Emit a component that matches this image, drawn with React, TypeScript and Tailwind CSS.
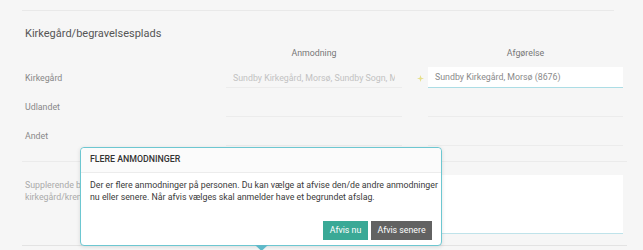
export default function App() {
  return (
    <div
      className="relative w-[643px] h-[250px] overflow-hidden bg-[#f6f6f6] text-[#777]"
      style={{ fontFamily: "Roboto, 'Liberation Sans', sans-serif" }}
    >
      {/* top divider */}
      <div className="pt-[10px] ml-[22px] mr-[29px]">
        <div className="border-t border-[#e9e9e9]" />
      </div>

      <div className="pl-[25px]">
        <h2 className="mt-[15px] text-[11px] leading-[15px] text-[#555]">Kirkegård/begravelsesplads</h2>

        {/* column headers */}
        <div className="mt-[6px] grid grid-cols-[201px_176px_26px_195px] text-[8.8px] leading-[12px] text-[#777]">
          <div />
          <div className="text-center">Anmodning</div>
          <div />
          <div className="text-center">Afgørelse</div>
        </div>

        {/* rows */}
        <div>
          <div className="h-[29px] grid grid-cols-[201px_176px_26px_195px] items-end">
            <div className="h-[20px] flex items-center pt-[2px] text-[8.8px] text-[#888]">Kirkegård</div>
            <div className="h-[20px] flex items-center pt-[2px] border-b border-[#ececec] pl-[7px] pr-[7px] overflow-hidden">
              <span className="text-[8.8px] text-[#c2c2c2] whitespace-nowrap overflow-hidden">
                Sundby Kirkegård, Morsø, Sundby Sogn, Morsø
              </span>
            </div>
            <div className="h-[20px] flex items-center justify-end pr-[4px]">
              <svg width="7" height="7" viewBox="0 0 10 10">
                <path d="M5 0 L6.2 3.8 L10 5 L6.2 6.2 L5 10 L3.8 6.2 L0 5 L3.8 3.8 Z" fill="#e6df8a" />
              </svg>
            </div>
            <div className="h-[21px] flex items-center pt-[1px] bg-white border-b-[1.5px] border-[#acdde5] px-[7px]">
              <span className="text-[8.8px] text-[#8a8a8a]">Sundby Kirkegård, Morsø (8676)</span>
            </div>
          </div>

          <div className="h-[29px] grid grid-cols-[201px_176px_26px_195px] items-end">
            <div className="h-[20px] flex items-center pt-[2px] text-[8.8px] text-[#888]">Udlandet</div>
            <div className="h-[20px] border-b border-[#ececec]" />
            <div />
            <div className="h-[20px] border-b border-[#ececec]" />
          </div>

          <div className="h-[29px] grid grid-cols-[201px_176px_26px_195px] items-end">
            <div className="h-[20px] flex items-center pt-[2px] text-[8.8px] text-[#888]">Andet</div>
            <div className="h-[20px] border-b border-[#ececec]" />
            <div />
            <div className="h-[20px] border-b border-[#ececec]" />
          </div>
        </div>
      </div>

      {/* section divider */}
      <div className="mt-[15px] ml-[22px] mr-[16px] border-t border-[#ebebeb]" />

      <div className="pl-[25px] mt-[13px] grid grid-cols-[201px_176px_26px_195px]">
        <div className="pt-[4px] text-[8.8px] leading-[12px] text-[#aaa]">
          Supplerende bemærkninger
          <br />
          kirkegård/krematorium
        </div>
        <div />
        <div />
        <div className="h-[59px] bg-white border-b-[1.5px] border-[#bfe3ea]" />
      </div>

      <div className="mt-[11px] ml-[22px] mr-[16px] border-t border-[#e3e3e3]" />

      {/* popover */}
      <div className="absolute left-[80px] top-[147px] w-[362px] h-[99px] rounded-[4px] border-[1.5px] border-[#6dc7d1] bg-white shadow-[0_1px_4px_rgba(0,0,0,0.12)] flex flex-col">
        <div className="h-[25px] flex items-center px-[9px] bg-[#fbfbfb] border-b border-[#ececec] rounded-t-[4px]">
          <span className="text-[8.8px] font-medium text-[#333]">FLERE ANMODNINGER</span>
        </div>
        <div className="px-[9px] pt-[6px] text-[8.8px] leading-[12px] text-[#3a3a3a] whitespace-nowrap">
          Der er flere anmodninger på personen. Du kan vælge at afvise den/de andre anmodninger
          <br />
          nu eller senere. Når afvis vælges skal anmelder have et begrundet afslag.
        </div>
        <div className="mt-auto mb-[5px] mr-[9px] flex justify-end gap-[3px]">
          <button className="h-[19px] w-[45px] bg-[#3aa996] text-white text-[8.8px]">Afvis nu</button>
          <button className="h-[19px] w-[61px] bg-[#626262] text-white text-[8.8px]">Afvis senere</button>
        </div>
        <svg className="absolute left-[174px] bottom-[-6px]" width="13" height="6" viewBox="0 0 13 6">
          <path d="M0 0 L13 0 L6.5 6 Z" fill="#5fb9c9" />
        </svg>
      </div>
    </div>
  );
}
